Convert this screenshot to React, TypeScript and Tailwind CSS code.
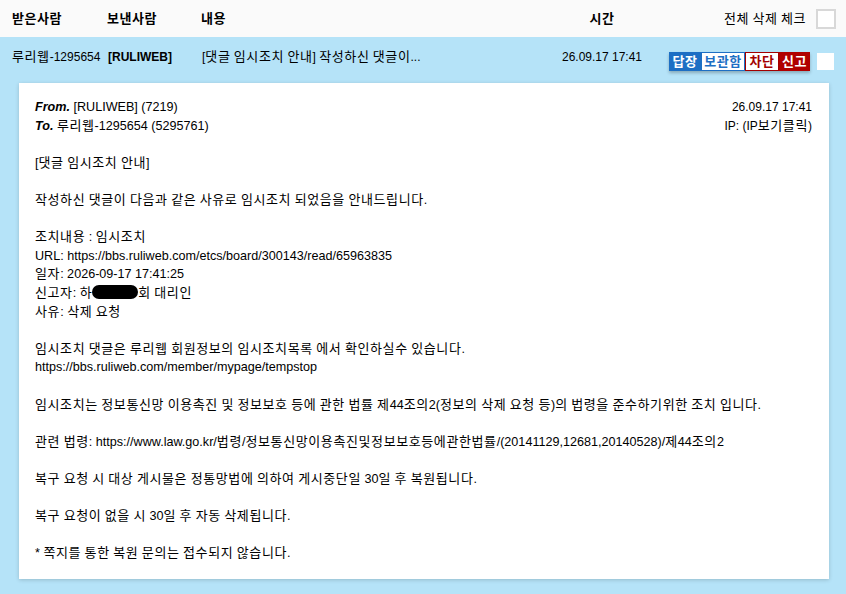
import React from "react";

const FONT = '"Liberation Sans", "Noto Sans CJK KR", sans-serif';

// Hangul runs are drawn a little larger than the Latin text, like the Dotum original.
function K({ t }: { t: string }) {
  const parts = t.split(/([\uAC00-\uD7A3\u3131-\u318E]+)/);
  return (
    <span>
      {parts.map((p, i) =>
        i % 2 === 1 ? (
          <span key={i} className="text-[13px] tracking-[0.6px]">
            {p}
          </span>
        ) : (
          <React.Fragment key={i}>{p}</React.Fragment>
        )
      )}
    </span>
  );
}

function Box({ className = "" }: { className?: string }) {
  return <span className={`inline-block bg-white ${className}`} />;
}

const body: (React.ReactNode | null)[] = [
  <K t="[댓글 임시조치 안내]" />,
  null,
  <K t="작성하신 댓글이 다음과 같은 사유로 임시조치 되었음을 안내드립니다." />,
  null,
  <K t="조치내용 : 임시조치" />,
  <K t="URL: https://bbs.ruliweb.com/etcs/board/300143/read/65963835" />,
  <K t="일자: 2026-09-17 17:41:25" />,
  <>
    <K t="신고자: 하" />
    <span className="inline-block w-[46px] h-[14px] bg-black rounded-[7px] align-[-2px]" />
    <K t="회 대리인" />
  </>,
  <K t="사유: 삭제 요청" />,
  null,
  <K t="임시조치 댓글은 루리웹 회원정보의 임시조치목록 에서 확인하실수 있습니다." />,
  <K t="https://bbs.ruliweb.com/member/mypage/tempstop" />,
  null,
  <K t="임시조치는 정보통신망 이용촉진 및 정보보호 등에 관한 법률 제44조의2(정보의 삭제 요청 등)의 법령을 준수하기위한 조치 입니다." />,
  null,
  <K t="관련 법령: https://www.law.go.kr/법령/정보통신망이용촉진및정보보호등에관한법률/(20141129,12681,20140528)/제44조의2" />,
  null,
  <K t="복구 요청 시 대상 게시물은 정통망법에 의하여 게시중단일 30일 후 복원됩니다." />,
  null,
  <K t="복구 요청이 없을 시 30일 후 자동 삭제됩니다." />,
  null,
  <K t="* 쪽지를 통한 복원 문의는 접수되지 않습니다." />,
];

export default function App() {
  return (
    <div className="w-[846px] h-[594px] overflow-hidden flex flex-col text-black" style={{ fontFamily: FONT }}>
      {/* header */}
      <div className="h-[37px] shrink-0 bg-[#fafafa] flex items-center pl-[12px] text-[13px] font-bold tracking-[0.5px]">
        <div className="w-[95px]">받은사람</div>
        <div className="w-[94px]">보낸사람</div>
        <div className="w-[351px]">내용</div>
        <div className="w-[100px] text-center">시간</div>
        <div className="flex-1 flex items-center justify-end gap-[10px] pr-[10px] font-normal tracking-normal text-[12px]">
          <K t="전체 삭제 체크" />
          <Box className="w-[20px] h-[20px] border-2 border-[#d8d8d8]" />
        </div>
      </div>

      {/* selected message */}
      <div className="flex-1 bg-[#b5e3f8] flex flex-col">
        <div className="h-[40px] flex items-center pl-[12px] text-[12px]">
          <div className="w-[96px]">
            <K t="루리웹-1295654" />
          </div>
          <div className="w-[94px] font-bold">[RULIWEB]</div>
          <div className="w-[350px] whitespace-nowrap">
            <K t="[댓글 임시조치 안내] 작성하신 댓글이..." />
          </div>
          <div className="w-[100px] text-center">26.09.17 17:41</div>
          <div className="ml-[17px] mt-[9px] flex items-stretch h-[19px] text-[13px] font-bold leading-[17px] tracking-[0.5px] shadow-[0_2px_3px_rgba(0,0,0,0.25)]">
            <span className="w-[32px] text-center bg-[#1d6fc4] text-white border border-[#1d6fc4]">답장</span>
            <span className="w-[44px] text-center bg-white text-[#1d6fc4] border border-[#1d6fc4]">보관함</span>
            <span className="w-[34px] text-center bg-white text-[#a30000] border border-[#a30000]">차단</span>
            <span className="w-[31px] text-center bg-[#b00000] text-white border border-[#b00000]">신고</span>
          </div>
          <div className="ml-auto mr-[12px] mt-[9px] flex">
            <Box className="w-[17px] h-[17px]" />
          </div>
        </div>

        <div className="mt-[6px] ml-[19px] mr-[17px] bg-white shadow-[0_1px_4px_rgba(0,0,0,0.18)] pt-[15px] pb-[16px] pl-[16px] pr-[17px] text-[12.6px] leading-[18.6px]">
          <div className="flex justify-between">
            <div>
              <div>
                <span className="font-bold italic">From.</span> [RULIWEB] (7219)
              </div>
              <div>
                <span className="font-bold italic">To.</span> <K t="루리웹-1295654 (5295761)" />
              </div>
            </div>
            <div className="text-right text-[12px]">
              <div>26.09.17 17:41</div>
              <div>
                <K t="IP: (IP보기클릭)" />
              </div>
            </div>
          </div>
          <div className="h-[18.6px]" />
          {body.map((line, i) =>
            line === null ? (
              <div key={i} className="h-[18.6px]" />
            ) : (
              <div key={i} className="whitespace-nowrap h-[18.6px]">
                {line}
              </div>
            )
          )}
        </div>
      </div>
    </div>
  );
}
